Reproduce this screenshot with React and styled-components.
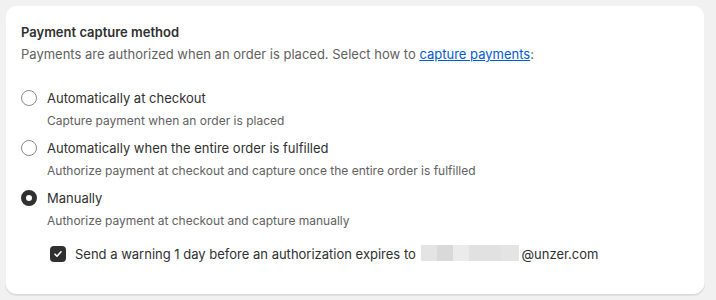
import styled, { createGlobalStyle } from "styled-components";

const GlobalStyle = createGlobalStyle`
  html, body {
    margin: 0;
    padding: 0;
    background: #f1f1f1;
  }
  body {
    font-family: Inter, "Noto Sans", sans-serif;
    font-size: 13px;
    line-height: 20px;
    color: #303030;
    -webkit-font-smoothing: antialiased;
  }
`;

const options = [
  {
    id: "auto",
    label: "Automatically at checkout",
    help: "Capture payment when an order is placed",
  },
  {
    id: "fulfilled",
    label: "Automatically when the entire order is fulfilled",
    help: "Authorize payment at checkout and capture once the entire order is fulfilled",
  },
  {
    id: "manual",
    label: "Manually",
    help: "Authorize payment at checkout and capture manually",
  },
];

const redactShades = [
  ["#e4e4e4", 16],
  ["#d9d9d9", 16],
  ["#ebebeb", 16],
  ["#e1e1e1", 32],
  ["#e4e4e4", 18],
];

export default function App() {
  const selected = "manual";

  return (
    <Page>
      <GlobalStyle />
      <Card>
        <Title>Payment capture method</Title>
        <Description>
          Payments are authorized when an order is placed. Select how to{" "}
          <Link href="#">capture payments</Link>:
        </Description>

        <ChoiceList>
          {options.map((opt) => (
            <Choice key={opt.id}>
              <ChoiceRow>
                <Radio $checked={opt.id === selected} />
                <ChoiceLabel>{opt.label}</ChoiceLabel>
              </ChoiceRow>
              <HelpText>{opt.help}</HelpText>
              {opt.id === "manual" && (
                <CheckRow>
                  <CheckBox>
                    <svg width="10" height="10" viewBox="0 0 10 10">
                      <path
                        d="M2 5.2l2 2 4-4.4"
                        fill="none"
                        stroke="#fff"
                        strokeWidth="1.6"
                        strokeLinecap="round"
                        strokeLinejoin="round"
                      />
                    </svg>
                  </CheckBox>
                  <CheckLabel>
                    Send a warning 1 day before an authorization expires to{" "}
                    <Redacted>
                      {redactShades.map(([c, w], i) => (
                        <RedactPart key={i} $color={c} $width={w} />
                      ))}
                    </Redacted>
                    @unzer.com
                  </CheckLabel>
                </CheckRow>
              )}
            </Choice>
          ))}
        </ChoiceList>
      </Card>
    </Page>
  );
}

const Page = styled.div`
  padding: 5px 11px 8px 5px;
`;

const Card = styled.div`
  background: #fff;
  border-radius: 12px;
  padding: 17px 16px 31px;
  box-shadow: 0 1px 0 0 rgba(26, 26, 26, 0.07),
    inset 0 -1px 0 0 rgba(0, 0, 0, 0.1), inset 0 0 0 1px rgba(0, 0, 0, 0.05);
`;

const Title = styled.h2`
  margin: 0;
  font-size: 13px;
  line-height: 20px;
  font-weight: 600;
  color: #303030;
`;

const Description = styled.p`
  margin: 2px 0 0;
  color: #616161;
`;

const Link = styled.a`
  color: #005bd3;
  text-decoration: underline;
`;

const ChoiceList = styled.div`
  display: flex;
  flex-direction: column;
  gap: 9px;
  margin-top: 24px;
`;

const Choice = styled.div`
  display: flex;
  flex-direction: column;
`;

const ChoiceRow = styled.label`
  display: flex;
  align-items: center;
  gap: 10px;
`;

const Radio = styled.span`
  box-sizing: border-box;
  width: 16px;
  height: 16px;
  border-radius: 50%;
  background: #fff;
  border: ${(p) => (p.$checked ? "5px solid #303030" : "1px solid #8a8a8a")};
  flex-shrink: 0;
`;

const ChoiceLabel = styled.span`
  color: #303030;
`;

const HelpText = styled.span`
  margin: 5px 0 0 26px;
  font-size: 12px;
  line-height: 16px;
  color: #616161;
`;

const CheckRow = styled.label`
  display: flex;
  align-items: center;
  gap: 9px;
  margin: 15px 0 0 29px;
`;

const CheckBox = styled.span`
  width: 16px;
  height: 16px;
  border-radius: 4px;
  background: #303030;
  display: flex;
  align-items: center;
  justify-content: center;
  flex-shrink: 0;
`;

const CheckLabel = styled.span`
  color: #303030;
`;

const Redacted = styled.span`
  display: inline-flex;
  height: 16px;
  vertical-align: -2px;
  margin: 0 2px 0 2px;
`;

const RedactPart = styled.span`
  width: ${(p) => p.$width}px;
  height: 16px;
  background: ${(p) => p.$color};
`;
